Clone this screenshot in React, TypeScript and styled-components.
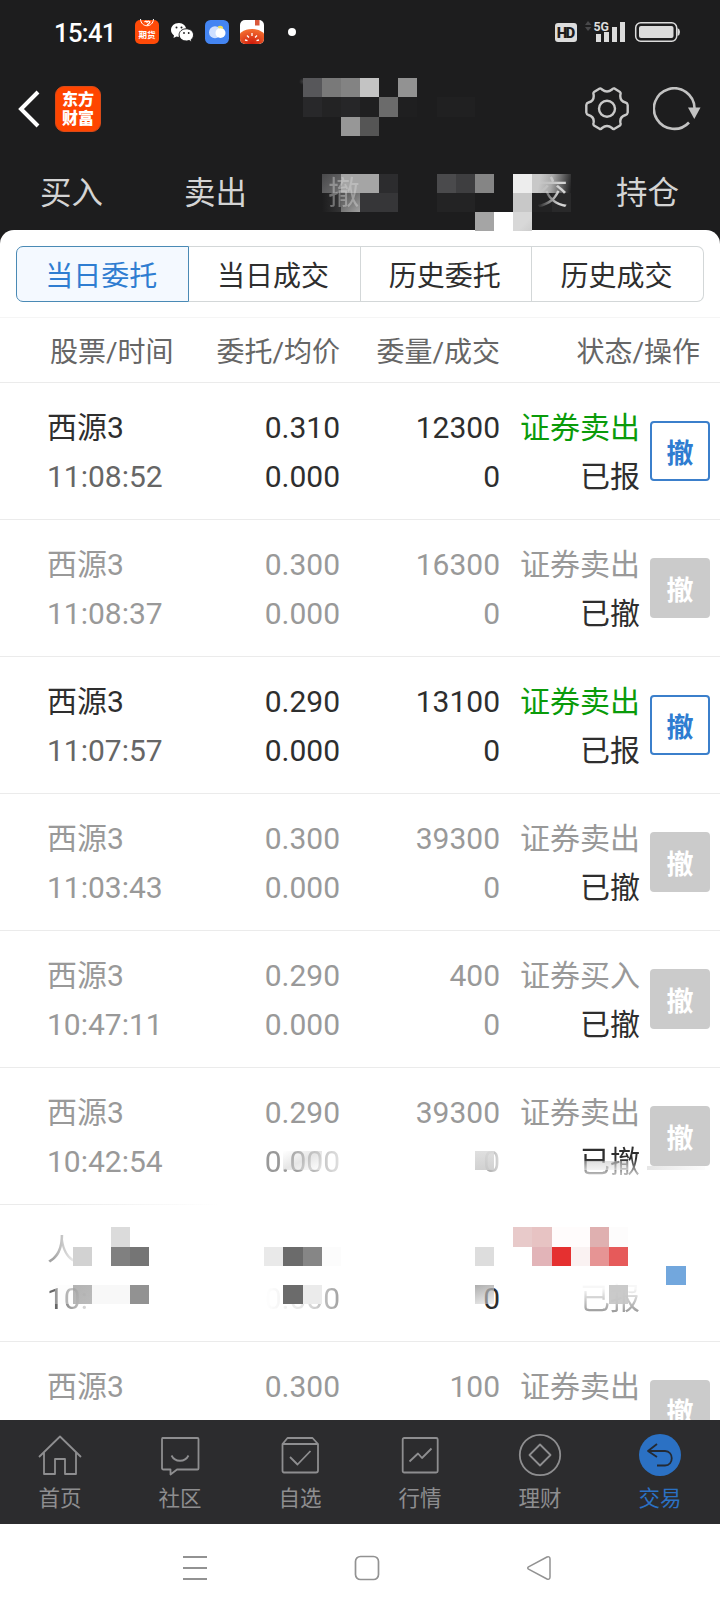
import React from 'react';
import styled, { createGlobalStyle, css } from 'styled-components';

const GlobalStyle = createGlobalStyle`
  *, *::before, *::after { box-sizing: border-box; }
  body {
    margin: 0;
    background: #fff;
    font-family: Roboto, "Noto Sans CJK SC", sans-serif;
    color: #333;
  }
`;

const Screen = styled.div`
  position: relative;
  width: 720px;
  height: 1612px;
  display: flex;
  flex-direction: column;
  overflow: hidden;
  background: #1d1d1e;
`;

const StatusBar = styled.div`
  height: 64px;
  flex: none;
  display: flex;
  align-items: center;
  justify-content: space-between;
  padding: 0 40px 0 54px;
`;

const StatusGroup = styled.div`
  display: flex;
  align-items: center;
`;

const Clock = styled.span`
  width: 81px;
  font-size: 25.5px;
  font-weight: 500;
  line-height: 30px;
  letter-spacing: -0.6px;
  padding-top: 2px;
  color: #fff;
  white-space: nowrap;
`;

const Notifications = styled.div`
  display: flex;
  align-items: center;
  gap: 11px;
`;

const FuturesIcon = styled.div`
  position: relative;
  width: 24px;
  height: 24px;
  border-radius: 5px;
  background: #ff4a08;
  color: #fff;
  font-size: 8.5px;
  font-weight: 700;
  line-height: 9px;
  padding-top: 11px;
  text-align: center;
  white-space: nowrap;
  svg { position: absolute; left: 0; top: -1px; }
`;

const Dot = styled.span`
  width: 8px;
  height: 8px;
  border-radius: 50%;
  background: #fff;
  margin-left: 13px;
`;

const HdBadge = styled.span`
  width: 22px;
  height: 19px;
  border-radius: 3px;
  background: #dcdcdc;
  color: #1d1d1e;
  font-size: 15px;
  font-weight: 900;
  line-height: 20px;
  text-align: center;
  letter-spacing: -1.8px;
  padding-right: 2px;
`;

const AppBar = styled.div`
  height: 90px;
  flex: none;
  display: flex;
  align-items: center;
  justify-content: space-between;
  padding: 0 19px 0 17px;
`;

const AppBarSide = styled.div<{ $gap: number }>`
  display: flex;
  align-items: center;
  gap: ${(p) => p.$gap}px;
`;

const Logo = styled.div`
  width: 46px;
  height: 46px;
  border-radius: 9px;
  background: #ff4500;
  border: 1px solid #d94a18;
  color: #fff;
  font: 900 16px/19px "Noto Sans CJK SC", sans-serif;
  text-align: center;
  padding-top: 2px;
`;

const TopTabs = styled.div`
  height: 76px;
  flex: none;
  display: grid;
  grid-template-columns: repeat(5, 144px);
`;

const TopTab = styled.div<{ $end?: boolean; $mask?: string }>`
  position: relative;
  z-index: 1;
  font-size: 31.5px;
  line-height: 80px;
  color: #d4d4d4;
  text-align: ${(p) => (p.$end ? 'right' : 'center')};
  ${(p) => p.$mask && css`mask-image: ${p.$mask};`}
  padding-right: ${(p) => (p.$end ? 8 : 1)}px;
`;

const Obscured = styled.span`
  display: inline-block;
  width: 1em;
`;

const Sheet = styled.div`
  flex: 1;
  min-height: 0;
  display: flex;
  flex-direction: column;
  background: #fff;
  border-radius: 14px 14px 0 0;
  padding-top: 16px;
`;

const Segments = styled.div`
  display: flex;
  width: 688px;
  height: 56px;
  margin: 0 auto 15px;
  flex: none;
`;

const Segment = styled.div<{ $active?: boolean }>`
  flex: 1;
  border: 1px solid ${(p) => (p.$active ? '#4a8ab5' : '#d3d7d8')};
  border-left-width: ${(p) => (p.$active ? 1 : 0)}px;
  background: ${(p) => (p.$active ? '#f4f9ff' : '#fff')};
  color: ${(p) => (p.$active ? '#2f7dd1' : '#2e2e2e')};
  font-size: 28px;
  line-height: 60px;
  text-align: center;
  padding-right: 2px;
  &:first-child { border-radius: 7px 0 0 7px; }
  &:last-child { border-radius: 0 7px 7px 0; }
`;

const ColumnHeads = styled.div`
  height: 66px;
  flex: none;
  display: grid;
  grid-template-columns: 150px 140px 160px 200px;
  padding-left: 50px;
  border-top: 1px solid #f5f5f5;
  border-bottom: 1px solid #ebebeb;
  font-size: 28px;
  line-height: 69px;
  color: #666;
  text-align: right;
  white-space: nowrap;
  > :first-child { text-align: left; }
`;

const OrderList = styled.div`
  flex: 1;
  min-height: 0;
  overflow: hidden;
`;

const OrderRow = styled.div<{ $muted: boolean; $fadeLine?: boolean }>`
  height: 137px;
  display: grid;
  grid-template-columns: 153px 140px 160px 140px 60px;
  padding: 20px 10px 0 47px;
  background: linear-gradient(
      to right,
      #ebebeb ${(p) => (p.$fadeLine ? '50px' : '100%')},
      #fff ${(p) => (p.$fadeLine ? '220px' : '100%')}
    )
    bottom / 100% 1px no-repeat;
  color: ${(p) => (p.$muted ? '#999' : '#2e2e2e')};
  font-size: 30px;
  line-height: 49px;
  white-space: nowrap;
`;

const Cell = styled.div<{ $left?: boolean }>`
  display: flex;
  flex-direction: column;
  align-items: ${(p) => (p.$left ? 'flex-start' : 'flex-end')};
`;

type Tone = 'inherit' | 'time' | 'sell' | 'dark';
const tones: Record<Tone, string> = {
  inherit: 'inherit',
  time: '#666',
  sell: '#0a9b0a',
  dark: '#2e2e2e',
};

const Line = styled.span<{ $tone?: Tone; $mask?: string }>`
  height: 49px;
  color: ${(p) => tones[p.$tone ?? 'inherit']};
  ${(p) => p.$mask && css`mask-image: ${p.$mask};`}
`;

const CancelButton = styled.button<{ $muted: boolean }>`
  width: 60px;
  height: 60px;
  margin: 18px 0 0 10px;
  padding: 2px 0 0 0;
  border: ${(p) => (p.$muted ? '0' : '2px solid #3b7fcb')};
  border-radius: 4px;
  background: ${(p) => (p.$muted ? '#cbcbcb' : '#fff')};
  color: ${(p) => (p.$muted ? '#fff' : '#2f7dd1')};
  font: 700 27px/58px "Noto Sans CJK SC", sans-serif;
  display: flex;
  align-items: center;
  justify-content: center;
`;

const BottomNav = styled.nav`
  height: 104px;
  flex: none;
  display: grid;
  grid-template-columns: repeat(6, 120px);
  background: #2c2c2e;
`;

const NavItem = styled.div<{ $active?: boolean }>`
  display: flex;
  flex-direction: column;
  align-items: center;
  padding-top: 13px;
  color: ${(p) => (p.$active ? '#2b71c4' : '#8e8e90')};
  font-size: 21.5px;
  line-height: 43px;
`;

const SystemBar = styled.div`
  height: 88px;
  flex: none;
  display: flex;
  align-items: center;
  padding: 0 168px 0 182px;
  justify-content: space-between;
  background: #fff;
`;

const Tile = styled.i<{ $x: number; $y: number; $w: number; $h: number; $fill: string }>`
  position: absolute;
  left: ${(p) => p.$x}px;
  top: ${(p) => p.$y}px;
  width: ${(p) => p.$w}px;
  height: ${(p) => p.$h}px;
  background: ${(p) => p.$fill};
`;

type TileSpec = [number, number, number, number, string];

const tiles: TileSpec[] = [
  // account name
  [299, 78, 8, 7, 'radial-gradient(#3c3c3e, #1d1d1e 70%)'],
  [303, 78, 19, 19, '#57575a'], [322, 78, 19, 19, '#797979'], [341, 78, 19, 19, '#838383'],
  [360, 78, 19, 19, '#c3c3c3'], [398, 78, 19, 19, '#929292'],
  [303, 97, 19, 20, '#28282a'], [322, 97, 19, 20, '#232324'], [341, 97, 19, 20, '#262628'],
  [360, 97, 19, 20, '#1f1f20'], [379, 97, 19, 20, '#6b6b6b'], [398, 97, 19, 20, '#1f1f20'],
  [341, 117, 19, 19, '#979797'], [360, 117, 19, 19, '#555555'], [437, 97, 38, 20, '#202021'],
  // tab captions
  [322, 174, 19, 19, 'linear-gradient(135deg, #48484a, #707071)'],
  [341, 174, 38, 19, '#a5a5a5'], [379, 174, 19, 19, '#2c2c2e'],
  [322, 193, 19, 19, 'linear-gradient(to right, #1d1d1e, #343435)'],
  [341, 193, 19, 19, 'linear-gradient(to bottom right, #505050, #a0a0a0)'],
  [360, 193, 38, 19, '#363638'],
  [437, 174, 19, 19, '#4a4a4c'], [456, 174, 19, 19, '#3e3e40'], [475, 174, 19, 19, '#858585'],
  [437, 193, 38, 19, '#232324'],
  [513, 174, 19, 19, '#ededed'],
  [532, 174, 39, 19, 'linear-gradient(100deg, #c8c8c8 20%, #a8a8a8 50%, #1d1d1e)'],
  [513, 193, 19, 19, '#c8c8c8'], [532, 193, 20, 19, '#222223'], [552, 193, 19, 19, '#29292a'],
  [475, 212, 19, 19, '#a5a5a5'], [494, 212, 19, 19, '#ffffff'],
  [513, 212, 19, 19, 'linear-gradient(135deg, #d8d8d8 60%, #cccccc)'],
  // sixth order
  [283, 1151, 39, 19, 'linear-gradient(to bottom right, rgba(255,255,255,.1), rgba(205,205,205,.5) 50%, rgba(255,255,255,.5))'],
  [475, 1151, 19, 19, 'linear-gradient(to bottom, rgba(220,220,220,.9), rgba(204,204,204,.9))'],
  [584, 1161, 44, 9, 'linear-gradient(to bottom, rgba(190,190,190,.5), rgba(235,235,235,.6))'],
  [647, 1166, 58, 4, 'linear-gradient(to right, #e6e6e6, rgba(240,240,240,.2))'],
  // seventh order
  [111, 1227, 19, 20, '#dbdbdb'], [73, 1247, 19, 19, '#d2d2d2'],
  [111, 1247, 19, 19, '#808080'], [130, 1247, 19, 19, '#757575'],
  [264, 1247, 19, 19, '#e9e9e9'], [283, 1247, 20, 19, '#6b6b6b'],
  [303, 1247, 19, 19, '#868686'], [322, 1247, 19, 19, '#fcfcfc'],
  [55, 1285, 18, 19, 'rgba(250,250,250,.35)'],
  [73, 1285, 19, 19, 'linear-gradient(135deg, rgba(160,160,160,.8), #bbbbbb)'],
  [92, 1285, 38, 19, '#f8f8f8'], [130, 1285, 19, 19, '#929292'],
  [283, 1285, 20, 19, '#6b6b6b'], [303, 1285, 19, 19, '#ebebeb'],
  [475, 1247, 19, 19, '#dddddd'],
  [475, 1285, 19, 19, 'linear-gradient(160deg, rgba(165,165,165,.9), rgba(225,225,225,.5))'],
  [513, 1227, 19, 20, '#e8caca'], [532, 1227, 20, 20, '#e7c3c3'],
  [552, 1227, 38, 20, '#fffcfc'], [590, 1227, 19, 20, '#dfb0b0'], [609, 1227, 19, 20, '#fdfcfc'],
  [532, 1247, 20, 19, '#e2b4b8'], [552, 1247, 19, 19, '#e53030'],
  [571, 1247, 19, 19, '#faf2f2'], [590, 1247, 19, 19, '#e69494'], [609, 1247, 19, 19, '#e65a5a'],
  [666, 1266, 20, 19, '#72a7dd'], [609, 1285, 19, 19, 'rgba(198,198,198,.92)'],
];

interface OrderData {
  name: string;
  time?: string;
  price?: string;
  average?: string;
  qty?: string;
  filled?: string;
  side?: string;
  status?: string;
  live?: boolean;
  soft?: boolean;
  obscured?: boolean;
}

const none = { average: '0.000', filled: '0' };

const orders: OrderData[] = [
  { ...none, name: '西源3', time: '11:08:52', price: '0.310', qty: '12300', side: '证券卖出', status: '已报', live: true },
  { ...none, name: '西源3', time: '11:08:37', price: '0.300', qty: '16300', side: '证券卖出', status: '已撤' },
  { ...none, name: '西源3', time: '11:07:57', price: '0.290', qty: '13100', side: '证券卖出', status: '已报', live: true },
  { ...none, name: '西源3', time: '11:03:43', price: '0.300', qty: '39300', side: '证券卖出', status: '已撤' },
  { ...none, name: '西源3', time: '10:47:11', price: '0.290', qty: '400', side: '证券买入', status: '已撤' },
  { ...none, name: '西源3', time: '10:42:54', price: '0.290', qty: '39300', side: '证券卖出', status: '已撤', soft: true },
  { ...none, name: '人', time: '10:4', status: '已报', obscured: true },
  { name: '西源3', price: '0.300', qty: '100', side: '证券卖出' },
];

const fades = {
  price6: 'linear-gradient(to right, #000 35%, rgba(0,0,0,.3))',
  qty6: 'linear-gradient(to right, #000, rgba(0,0,0,.35))',
  status6: 'linear-gradient(to bottom, #000 45%, rgba(0,0,0,.35) 75%)',
  name7: 'linear-gradient(to right, rgba(0,0,0,.9) 20%, rgba(0,0,0,.5) 55%, rgba(0,0,0,.1))',
  time7: 'linear-gradient(to right, #000 15%, rgba(0,0,0,.35) 60%, transparent 85%)',
  price7: 'linear-gradient(to right, transparent, rgba(0,0,0,.12) 50%, rgba(0,0,0,.45))',
  status7: 'linear-gradient(to bottom, rgba(0,0,0,.04) 30%, rgba(0,0,0,.5) 80%)',
};

function Order({ o }: { o: OrderData }) {
  const muted = !o.live;
  return (
    <OrderRow $muted={muted} $fadeLine={o.soft}>
      <Cell $left>
        <Line $mask={o.obscured ? fades.name7 : undefined}>{o.name}</Line>
        <Line $tone={muted && !o.obscured ? 'inherit' : 'time'} $mask={o.obscured ? fades.time7 : undefined}>{o.time}</Line>
      </Cell>
      <Cell>
        <Line>{o.price}</Line>
        <Line $tone={o.obscured ? 'dark' : 'inherit'} $mask={o.soft ? fades.price6 : o.obscured ? fades.price7 : undefined}>{o.average}</Line>
      </Cell>
      <Cell>
        <Line>{o.qty}</Line>
        <Line $tone={o.obscured ? 'dark' : 'inherit'} $mask={o.soft ? fades.qty6 : undefined}>{o.filled}</Line>
      </Cell>
      <Cell>
        <Line $tone={o.live ? 'sell' : 'inherit'}>{o.side}</Line>
        <Line $tone="dark" $mask={o.soft ? fades.status6 : o.obscured ? fades.status7 : undefined}>{o.status}</Line>
      </Cell>
      {!o.obscured && <CancelButton $muted={muted}>撤</CancelButton>}
    </OrderRow>
  );
}

const NavIcon = ({ children }: { children: React.ReactNode }) => (
  <svg width="44" height="44" viewBox="0 0 44 44" fill="none" stroke="currentColor" strokeWidth="1.800" strokeLinejoin="round">
    {children}
  </svg>
);

const navItems: { label: string; icon: React.ReactNode; active?: boolean }[] = [
  { label: '首页', icon: <path d="M1 24 22 3.500 43 24M6 19.500V41H17V26H27V41H38V19.500" /> },
  {
    label: '社区',
    icon: <path d="M4.500 5H39.500Q40.500 5 40.500 6V35.500Q40.500 36.500 39.500 36.500H19L12.500 41.500V36.500H5.500Q4 36.500 4 35V6Q4 5 5 5ZM13.500 22.500C17 29.500 27 29.500 30.500 22.500" />,
  },
  { label: '自选', icon: <path d="M9.500 5H34.500L40 11V37.500Q40 39.500 38 39.500H6Q4.500 39.500 4.500 37.500V11ZM5 11H40M12 24 19.500 31.500 32.500 18" /> },
  { label: '行情', icon: <><rect x="4.700" y="5" width="35" height="34.500" rx="1.500" /><path d="M11.500 28.500 20 20.500 24 25 33.500 15.500" /></> },
  { label: '理财', icon: <><circle cx="22" cy="22" r="20.200" /><path d="M22 11.500 32.500 22 22 32.500 11.500 22Z" /></> },
  {
    label: '交易',
    active: true,
    icon: <><circle cx="22" cy="22" r="21" fill="#2b71c4" stroke="none" /><path d="M19 11 10 18 19 24M10 18H27C36 18 36 32.500 27 32.500H19" stroke="#242a33" /></>,
  },
];

export default function App() {
  return (
    <Screen>
      <GlobalStyle />
      <StatusBar>
        <StatusGroup>
          <Clock>15:41</Clock>
          <Notifications>
            <FuturesIcon>
              <svg width="24" height="12" viewBox="0 0 24 12" fill="none" stroke="#fff">
                <path d="M5.500 0C6 9 18 9 18.500 0" />
                <path d="M9.500 3Q12 1 12 4Q12 1 15 3Q14 5 12 6" strokeWidth="1.200" />
              </svg>
              期货
            </FuturesIcon>
            <svg width="24" height="24" viewBox="0 0 24 24">
              <path d="M9 3C4 3 1 6.300 1 10c0 2.300 1.200 4.200 3 5.400L3.500 18l3-1.500c4 1 9.800-.9 9.800-6.500C16.300 6 13 3 9 3Z" fill="#fff" />
              <path d="M16.300 8.800c-4.200 0-7.200 2.700-7.200 6s3 6.200 7.200 6.200c1 0 2-.2 2.800-.5l2.700 1.400-.6-2.300c1.500-1.200 2.300-2.800 2.300-4.700 0-3.300-3-6.100-7.200-6.100Z" fill="#fff" stroke="#1d1d1e" strokeWidth="1" />
              <g fill="#1d1d1e"><circle cx="6.500" cy="7.500" r="1" /><circle cx="11.500" cy="7.500" r="1" /><circle cx="14" cy="13" r=".9" /><circle cx="18.700" cy="13" r=".9" /></g>
            </svg>
            <svg width="24" height="24" viewBox="0 0 24 24">
              <rect width="24" height="24" rx="5.500" fill="#4485f2" />
              <circle cx="15.200" cy="8.700" r="3" fill="#f3e05a" />
              <circle cx="10" cy="12.300" r="6" fill="#cfe0ff" />
              <circle cx="15.500" cy="13" r="5" fill="#fff" />
              <path d="M13 7.500Q15 5 17.800 7.500V9Q15.500 7.700 14 8.600Z" fill="#f3e05a" />
            </svg>
            <svg width="24" height="24" viewBox="0 0 24 24">
              <defs>
                <clipPath id="tomatoFrame"><rect width="24" height="24" rx="5" /></clipPath>
                <radialGradient id="tomato" cx=".5" cy=".65" r=".6"><stop stopColor="#cf1c0c" /><stop offset="1" stopColor="#f26a2e" /></radialGradient>
              </defs>
              <g clipPath="url(#tomatoFrame)">
                <rect width="24" height="24" fill="#fff" />
                <rect x="15" width="4.500" height="5.500" fill="#d9583a" />
                <ellipse cx="12" cy="20" rx="15" ry="11" fill="url(#tomato)" />
                <path d="M5 20l2.500.7M7 15.500l2 2M12 13v3M17 15.500l-2 2M19 20l-2.500.7" stroke="#fff" strokeWidth="1.300" />
              </g>
            </svg>
            <Dot />
          </Notifications>
        </StatusGroup>
        <StatusGroup>
          <HdBadge>HD</HdBadge>
          <svg width="103" height="32" viewBox="577 16 103 32">
            <path d="M585 25l3-4 3.500 4ZM585 27l3 4 3.500-4Z" fill="#48484a" />
            <text x="593.500" y="30.500" fontSize="13.500" fontWeight="700" fill="#dcdcdc" fontFamily="Roboto, sans-serif" textLength="15.500" lengthAdjust="spacingAndGlyphs">5G</text>
            <path d="M596 34h5v8h-5ZM604 32h5v10h-5ZM612 27h5v15h-5ZM620 22h5v20h-5Z" fill="#dcdcdc" />
            <rect x="635.700" y="22.700" width="41" height="18.600" rx="5" fill="none" stroke="#dcdcdc" strokeWidth="1.500" />
            <rect x="639" y="26" width="34.500" height="12" rx="2" fill="#dcdcdc" />
            <path d="M677.500 28q2.500 1 2.500 4t-2.500 4Z" fill="#dcdcdc" />
          </svg>
        </StatusGroup>
      </StatusBar>
      <AppBar>
        <AppBarSide $gap={15}>
          <svg width="23" height="40" viewBox="0 0 23 40" fill="none" stroke="#fff" strokeWidth="4">
            <path d="M21 3 4 20 21 37" />
          </svg>
          <Logo>东方<br />财富</Logo>
        </AppBarSide>
        <AppBarSide $gap={24}>
          <svg width="44" height="44" viewBox="0 0 44 44" fill="none" stroke="#c8c8c8" strokeWidth="2.400" strokeLinejoin="round">
            <path d="M14.700 1.500Q16 1 17 2.500Q22 6.500 27 2.500Q28 1 29.500 1.500L35 5Q36 6 35.400 7.500Q34.500 14 40.500 15.500Q42.500 16 42.700 18V25.500Q42.500 27.500 40.500 28Q34.500 30 35.400 35.500Q36 37.500 35 38.500L29.500 41.800Q28 42.500 27 41Q22 37 17 41Q16 42.500 14.500 41.800L9 38.500Q8 37.500 8.600 35.500Q9.500 30 3.500 28Q1.500 27.500 1.300 25.500V18Q1.500 16 3.500 15.500Q9.500 14 8.600 7.500Q8 6 9 5Z" />
            <circle cx="22" cy="21.700" r="8" />
          </svg>
          <svg width="48" height="44" viewBox="0 0 48 44">
            <path d="M36 35.500A20.300 20.300 0 1 1 41.500 21" fill="none" stroke="#c2c2c2" strokeWidth="2.600" />
            <path d="M35 20.500H47.500L41.300 32Z" fill="#c2c2c2" />
          </svg>
        </AppBarSide>
      </AppBar>
      <TopTabs>
        <TopTab>买入</TopTab>
        <TopTab>卖出</TopTab>
        <TopTab $mask="linear-gradient(to right, rgba(0,0,0,.35), rgba(0,0,0,.6))">撤<Obscured /></TopTab>
        <TopTab $end $mask="linear-gradient(to right, rgba(0,0,0,.1) 75%, #000 88%)">交</TopTab>
        <TopTab>持仓</TopTab>
      </TopTabs>
      <Sheet>
        <Segments>
          <Segment $active>当日委托</Segment>
          <Segment>当日成交</Segment>
          <Segment>历史委托</Segment>
          <Segment>历史成交</Segment>
        </Segments>
        <ColumnHeads>
          <span>股票/时间</span>
          <span>委托/均价</span>
          <span>委量/成交</span>
          <span>状态/操作</span>
        </ColumnHeads>
        <OrderList>
          {orders.map((o, i) => <Order key={i} o={o} />)}
        </OrderList>
      </Sheet>
      <BottomNav>
        {navItems.map((n) => (
          <NavItem key={n.label} $active={n.active}>
            <NavIcon>{n.icon}</NavIcon>
            {n.label}
          </NavItem>
        ))}
      </BottomNav>
      <SystemBar>
        <svg width="26" height="26" viewBox="0 0 26 26" stroke="#929292" strokeWidth="1.800"><path d="M1 2H25M1 13H25M1 24H25" /></svg>
        <svg width="26" height="26" viewBox="0 0 26 26" fill="none" stroke="#929292" strokeWidth="1.700"><rect x="1.500" y="1.500" width="23" height="23" rx="5" /></svg>
        <svg width="26" height="26" viewBox="0 0 26 26" fill="none" stroke="#929292" strokeWidth="1.500" strokeLinejoin="round"><path d="M2.500 11.800 21 2Q24 1 24 4V22Q24 25 21 24L2.500 14.200Q1 13 2.500 11.800Z" /></svg>
      </SystemBar>
      {tiles.map(([x, y, w, h, fill], i) => (
        <Tile key={i} $x={x} $y={y} $w={w} $h={h} $fill={fill} />
      ))}
    </Screen>
  );
}
